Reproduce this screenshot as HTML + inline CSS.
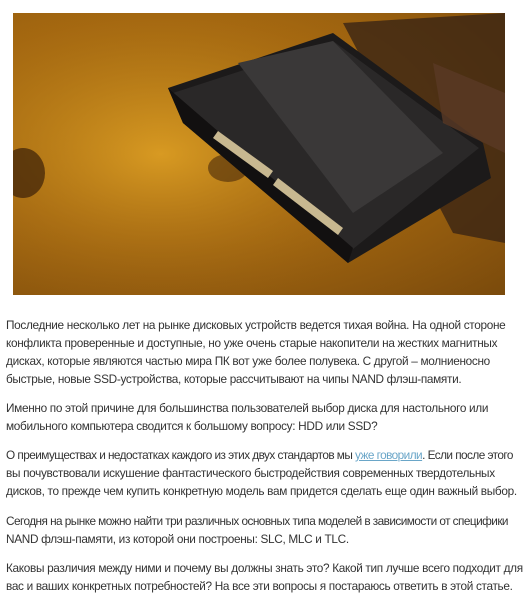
<!DOCTYPE html>
<html><head><meta charset="utf-8"><style>
body{margin:0;background:#fff;width:532px;height:604px;overflow:hidden;font-family:"Liberation Sans",sans-serif;}
.img{position:absolute;left:13px;top:13px;width:492px;height:282px;overflow:hidden;
background:radial-gradient(ellipse at 30% 40%,#c98a18 0%,#a86a10 45%,#7a4a0c 100%);}
.t{position:absolute;left:6px;font-size:11.8px;letter-spacing:-0.32px;color:#333;white-space:nowrap;line-height:18px;}
.n{letter-spacing:-0.55px;}
a{color:#6aa6c8;text-decoration:underline;}
</style></head><body>
<div class="img">
<svg width="492" height="282" viewBox="0 0 492 282">
<defs><radialGradient id="g" cx="0.3" cy="0.5" r="0.6"><stop offset="0" stop-color="#d89a22"/><stop offset="1" stop-color="#8a5510" stop-opacity="0"/></radialGradient></defs>
<rect width="492" height="282" fill="url(#g)"/>
<ellipse cx="10" cy="160" rx="22" ry="25" fill="#3a2008" opacity="0.7"/>
<ellipse cx="215" cy="155" rx="20" ry="14" fill="#4a2a0a" opacity="0.6"/>
<path d="M330 10 L492 0 L492 230 L440 220 Z" fill="#3a2414" opacity="0.8"/>
<path d="M155 75 L320 20 L470 130 L478 165 L335 250 L170 110 Z" fill="#1c1a1a"/>
<path d="M160 80 L320 28 L466 135 L335 240 Z" fill="#2a2828"/>
<path d="M225 50 L320 28 L430 140 L340 200 Z" fill="#3a3838"/>
<path d="M155 75 L170 110 L335 250 L340 235 Z" fill="#121010"/>
<path d="M205 118 L260 158 L255 165 L200 125 Z" fill="#c8b890"/>
<path d="M265 165 L330 215 L325 222 L260 172 Z" fill="#c8b890"/>
<path d="M420 50 L492 80 L492 140 L430 110 Z" fill="#5a3a26" opacity="0.8"/>
</svg>
</div>
<div class="t" style="top:316px">Последние несколько лет на рынке дисковых устройств ведется тихая война. На одной стороне<br>конфликта проверенные и доступные, но уже очень старые накопители на жестких магнитных<br>дисках, которые являются частью мира ПК вот уже более полувека. С другой – молниеносно<br>быстрые, новые SSD-устройства, которые рассчитывают на чипы NAND флэш-памяти.</div>
<div class="t" style="top:399px">Именно по этой причине для большинства пользователей выбор диска для настольного или<br>мобильного компьютера сводится к большому вопросу: HDD или SSD?</div>
<div class="t" style="top:446px"><span class="n">О преимуществах и недостатках каждого из этих двух стандартов мы <a>уже говорили</a>. Если после этого</span><br>вы почувствовали искушение фантастического быстродействия современных твердотельных<br>дисков, то прежде чем купить конкретную модель вам придется сделать еще один важный выбор.</div>
<div class="t" style="top:512px"><span class="n">Сегодня на рынке можно найти три различных основных типа моделей в зависимости от специфики</span><br>NAND флэш-памяти, из которой они построены: SLC, MLC и TLC.</div>
<div class="t" style="top:559px">Каковы различия между ними и почему вы должны знать это? Какой тип лучше всего подходит для<br>вас и ваших конкретных потребностей? На все эти вопросы я постараюсь ответить в этой статье.</div>
</body></html>
